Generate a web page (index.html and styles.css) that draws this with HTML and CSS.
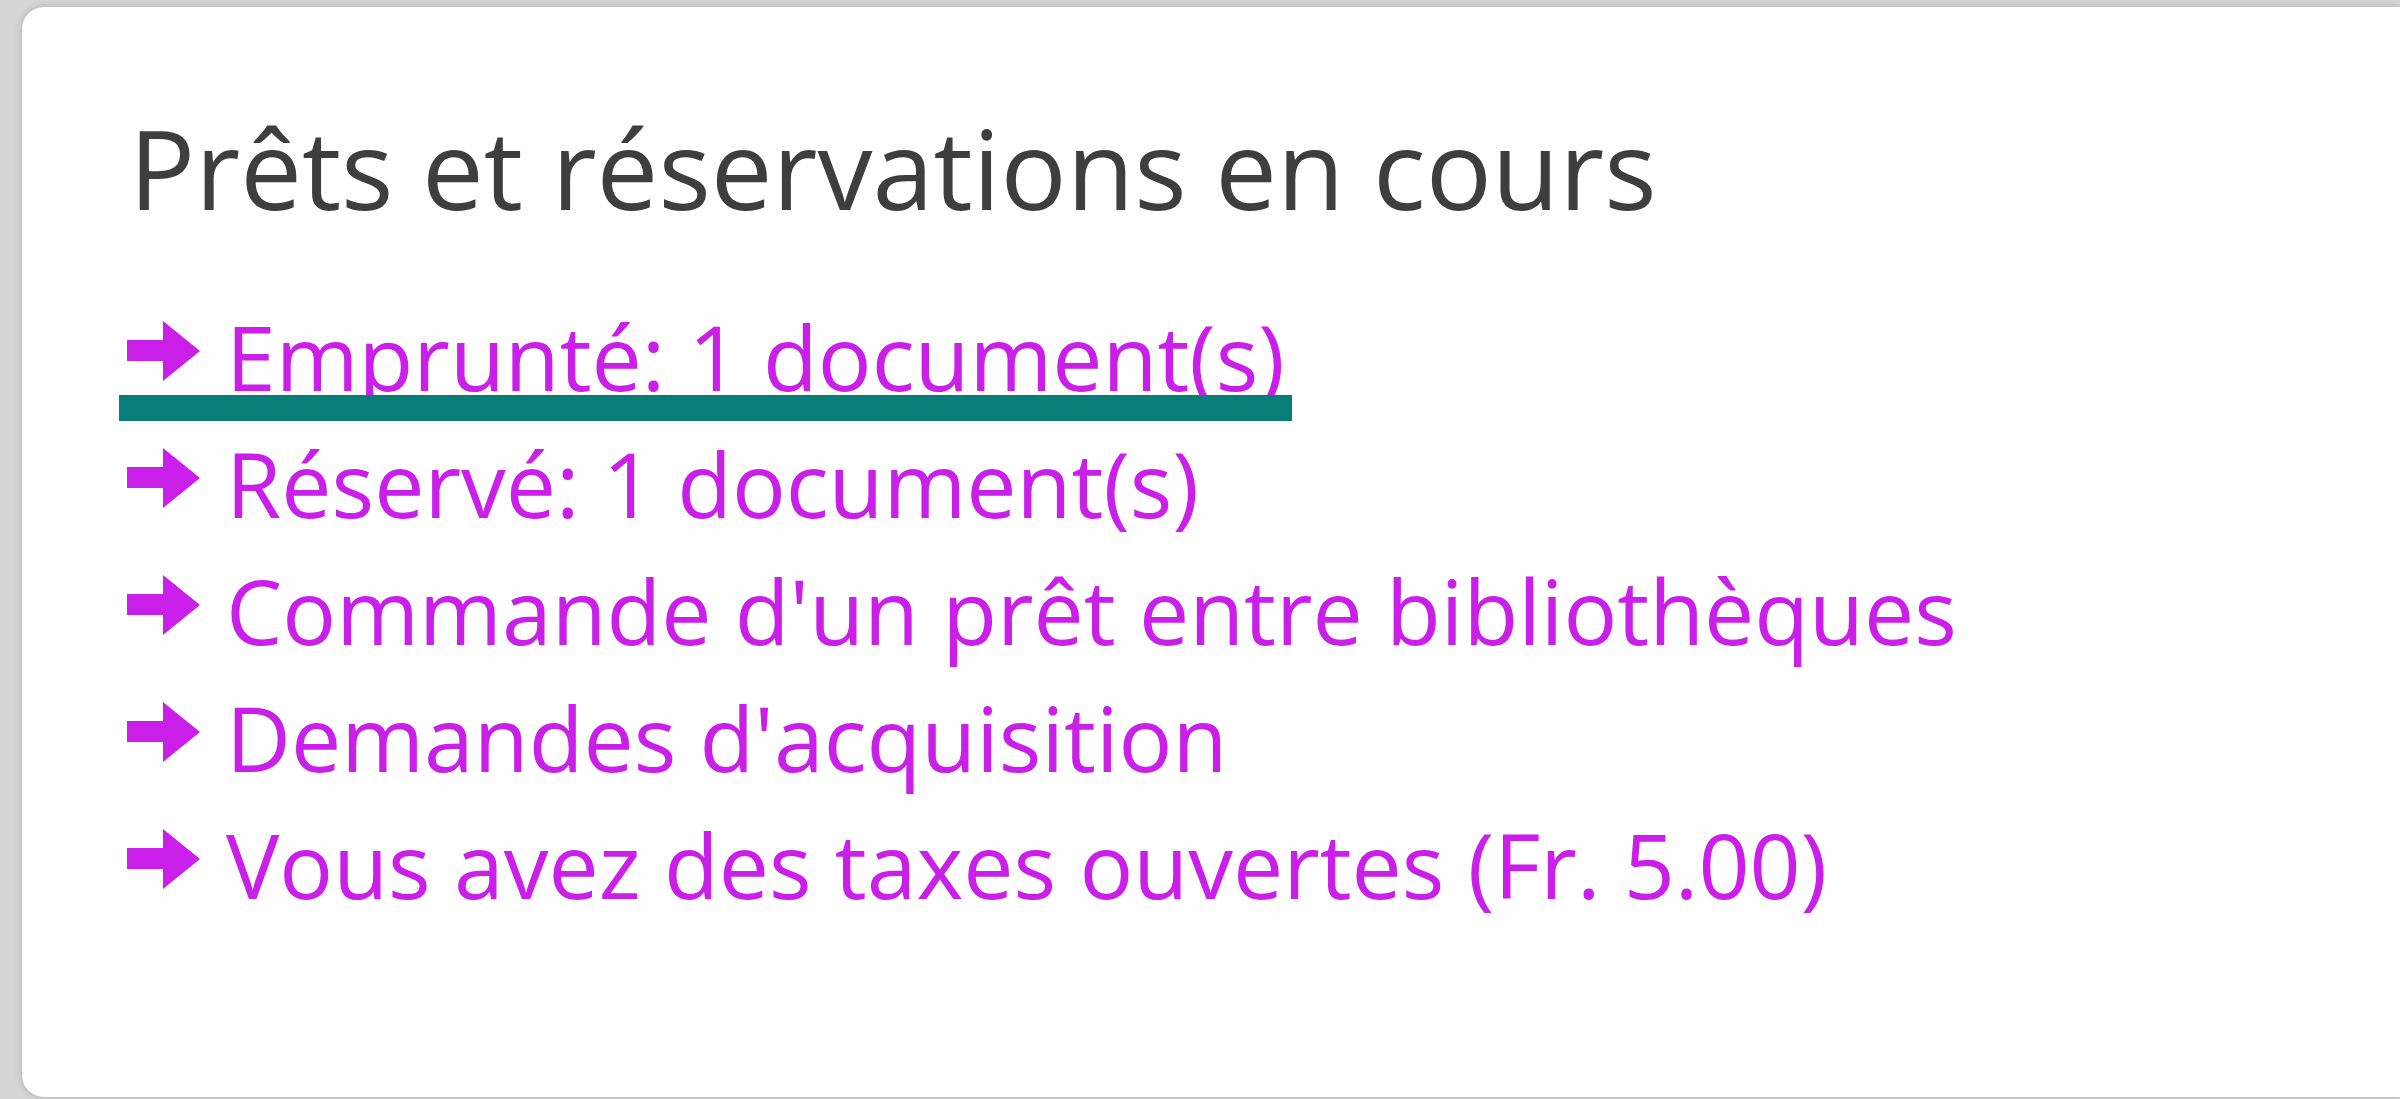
FILE: index.html
```html
<!DOCTYPE html>
<html lang="fr">
<head>
    <meta charset="UTF-8">
    <meta name="viewport" content="width=device-width, initial-scale=1.0">
    <title>Prêts et réservations en cours</title>
    <link rel="stylesheet" href="styles.css">
</head>
<body>
    <div class="panel">
        <h2 class="panel-title">Prêts et réservations en cours</h2>
        <ul class="loan-links">
            <li>
                <a class="loan-link is-focused" href="#">
                    <svg class="icon-arrow" viewBox="0 0 73 60"><polygon points="0,19 36,19 36,0 73,30 36,60 36,40 0,40"/></svg>Emprunté: 1 document(s)
                </a>
            </li>
            <li>
                <a class="loan-link" href="#">
                    <svg class="icon-arrow" viewBox="0 0 73 60"><polygon points="0,19 36,19 36,0 73,30 36,60 36,40 0,40"/></svg>Réservé: 1 document(s)
                </a>
            </li>
            <li>
                <a class="loan-link" href="#">
                    <svg class="icon-arrow" viewBox="0 0 73 60"><polygon points="0,19 36,19 36,0 73,30 36,60 36,40 0,40"/></svg>Commande d'un prêt entre bibliothèques
                </a>
            </li>
            <li>
                <a class="loan-link" href="#">
                    <svg class="icon-arrow" viewBox="0 0 73 60"><polygon points="0,19 36,19 36,0 73,30 36,60 36,40 0,40"/></svg>Demandes d'acquisition
                </a>
            </li>
            <li>
                <a class="loan-link" href="#">
                    <svg class="icon-arrow" viewBox="0 0 73 60"><polygon points="0,19 36,19 36,0 73,30 36,60 36,40 0,40"/></svg>Vous avez des taxes ouvertes (Fr. 5.00)
                </a>
            </li>
        </ul>
    </div>
</body>
</html>
```

FILE: styles.css
```css
* {
    margin: 0;
    padding: 0;
    box-sizing: border-box;
}
html, body {
    height: 100%;
}
body {
    padding: 7px 0 2px 22px;
    background: #d6d6d6;
    font-family: "Open Sans", "Noto Sans", sans-serif;
    -webkit-font-smoothing: antialiased;
}
.panel {
    height: 100%;
    padding: 92px 0 0 107px;
    background: #fff;
    border-radius: 22px 0 0 22px;
    box-shadow: 0 0 8px rgba(0, 0, 0, .18);
}
.panel-title {
    margin-bottom: 65px;
    padding-top: 7px;
    color: #3e3e3e;
    font-size: 110px;
    font-weight: 400;
    line-height: 122px;
}
.loan-links {
    list-style: none;
    margin-left: -2px;
}
.loan-link {
    position: relative;
    display: inline-block;
    color: #c91fe8;
    font-size: 89.5px;
    line-height: 127px;
    text-decoration: none;
    white-space: nowrap;
}
/* la flèche est dessinée en svg, pas de police d'icônes */
.icon-arrow {
    width: 73px;
    height: 60px;
    margin-right: 26px;
    vertical-align: 10px;
    fill: #c91fe8;
}
/* soulignement du lien qui a le focus */
.is-focused::after {
    content: '';
    position: absolute;
    top: 102px;
    left: -8px;
    right: -7px;
    height: 26px;
    background: #077f78;
}
```
